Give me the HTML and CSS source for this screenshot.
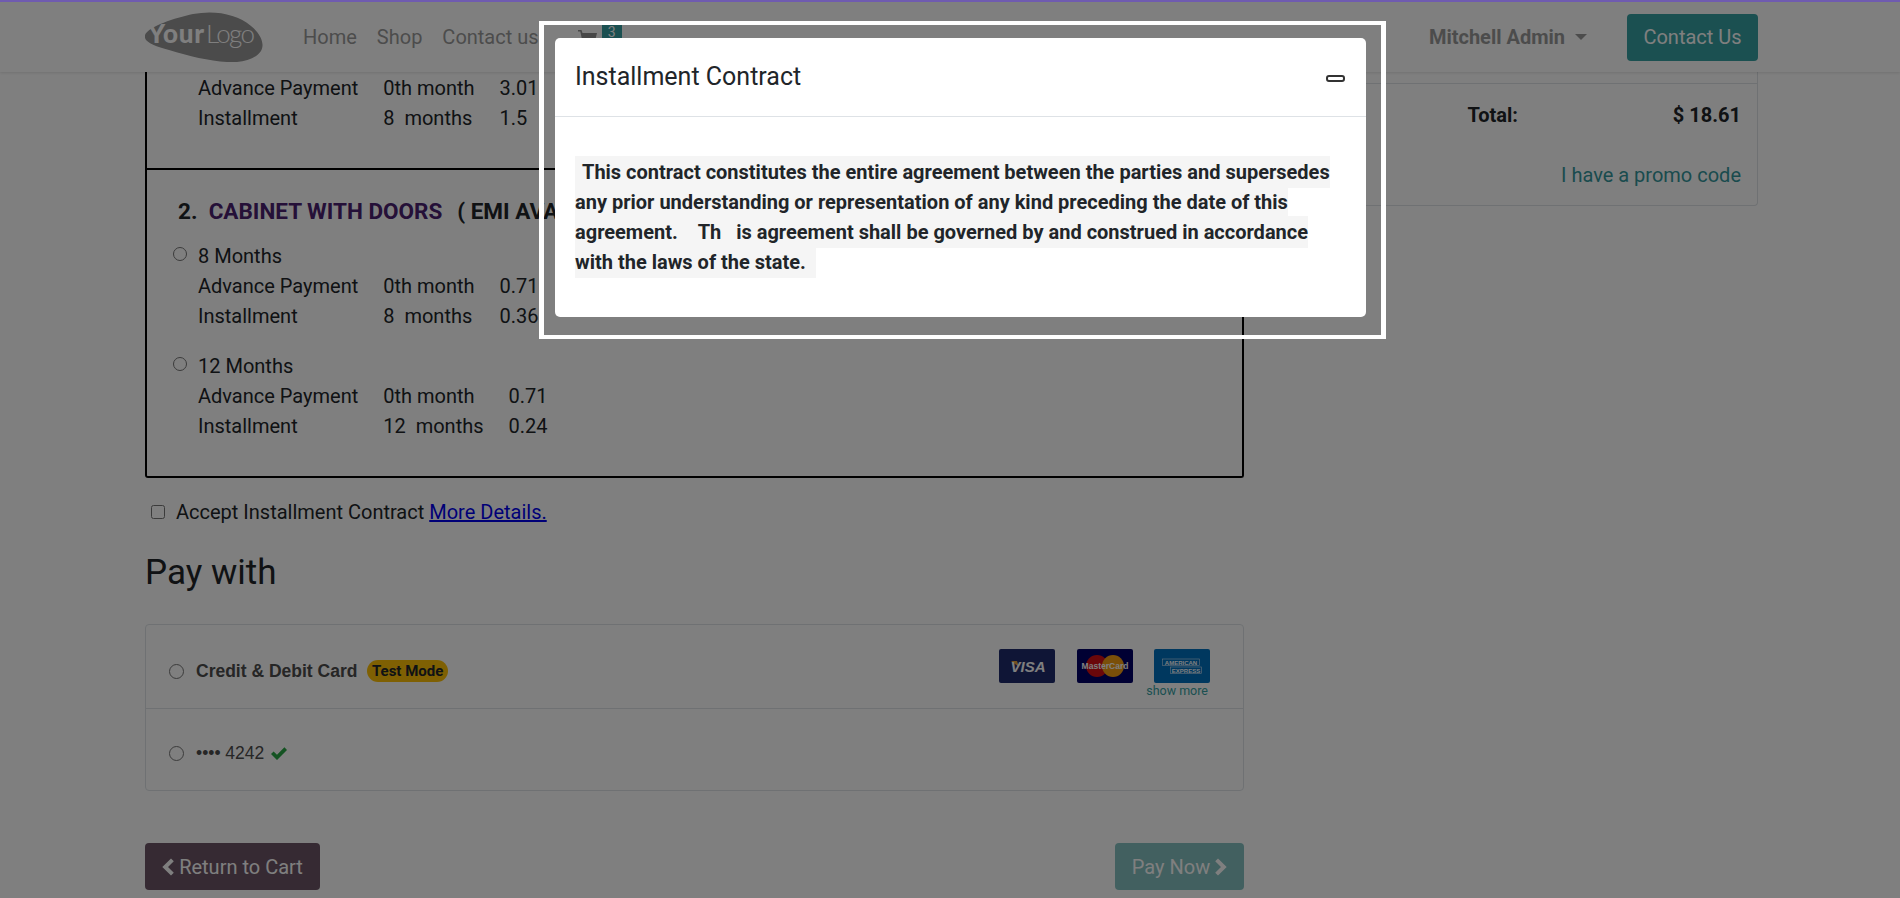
FILE: index.html
```html
<!DOCTYPE html>
<html lang="en">
<head>
<meta charset="utf-8">
<title>Payment</title>
<link rel="stylesheet" href="styles.css">
</head>
<body>
<div class="topline"></div>
<header class="navbar">
  <a class="logo" href="#" aria-label="Your Logo">
    <svg width="118" height="50" viewBox="0 0 118 50">
      <path d="M0 23C4 14 30 6 48 2C70-2 92 2 106 14C116 22 120 32 116 39C110 48 96 51 82 50C64 49 44 44 24 38C10 34-2 30 0 23Z" fill="#969696"/>
      <text x="3" y="31" textLength="56" class="logo-your">Your</text>
      <text x="61" y="31" textLength="49" class="logo-logo">Logo</text>
    </svg>
  </a>
  <nav class="nav">
    <a href="#">Home</a>
    <a href="#">Shop</a>
    <a href="#">Contact us</a>
    <a href="#" class="cart">
      <svg width="19" height="18" viewBox="0 0 19 18"><path d="M0 0h3.500l1 3H19l-2 8H6l.4 2H17v1.600H5L2.300 1.600H0z" fill="#8f8f8f"/><circle cx="7" cy="16.500" r="1.500" fill="#8f8f8f"/><circle cx="15" cy="16.500" r="1.500" fill="#8f8f8f"/></svg>
      <span class="badge">3</span>
    </a>
  </nav>
  <div class="nav-right">
    <a href="#" class="user">Mitchell Admin<span class="caret"></span></a>
    <a href="#" class="btn btn-contact">Contact Us</a>
  </div>
</header>

<main class="page">
  <div class="left">
    <div class="emi-box">
      <section class="emi-section first">
        <div class="option no-radio">
          <table class="plan">
            <tr><td>Advance Payment</td><td>0th month</td><td>3.01</td></tr>
            <tr><td>Installment</td><td>8&nbsp; months</td><td>1.5</td></tr>
          </table>
        </div>
      </section>
      <section class="emi-section">
        <h4 class="emi-title">2.&nbsp; <span class="purple">CABINET WITH DOORS</span> &nbsp; ( EMI AVAILABLE )</h4>
        <div class="option">
          <input type="radio" name="plan">
          <div>
            <div class="opt-label">8 Months</div>
            <table class="plan">
              <tr><td>Advance Payment</td><td>0th month</td><td>0.71</td></tr>
              <tr><td>Installment</td><td>8&nbsp; months</td><td>0.36</td></tr>
            </table>
          </div>
        </div>
        <div class="option">
          <input type="radio" name="plan">
          <div>
            <div class="opt-label">12 Months</div>
            <table class="plan">
              <tr><td>Advance Payment</td><td>0th month</td><td>0.71</td></tr>
              <tr><td>Installment</td><td>12&nbsp; months</td><td>0.24</td></tr>
            </table>
          </div>
        </div>
      </section>
    </div>

    <label class="accept"><input type="checkbox"><span>Accept Installment Contract <a href="#">More Details.</a></span></label>

    <h3 class="pay-title">Pay with</h3>

    <div class="pay-card">
      <div class="pay-row pay-row-main">
        <input type="radio" name="pay">
        <strong class="pay-name">Credit &amp; Debit Card</strong>
        <span class="test-badge">Test Mode</span>
        <div class="pay-icons">
          <div class="icon-line">
            <svg width="56" height="34" viewBox="0 0 56 34"><rect width="56" height="34" rx="2" fill="#1f2a6d"/><path d="M12 12l6 0 2 6z" fill="#e8a33d"/><text x="29" y="23" class="visa">VISA</text></svg>
            <svg width="56" height="34" viewBox="0 0 56 34"><rect width="56" height="34" rx="2" fill="#000066"/><circle cx="20" cy="17" r="11" fill="#d40f14"/><circle cx="36" cy="17" r="11" fill="#f59e12"/><text x="28" y="20" class="mc">MasterCard</text></svg>
            <svg width="56" height="34" viewBox="0 0 56 34"><rect width="56" height="34" rx="2" fill="#0170bf"/><rect x="8.500" y="10" width="37" height="6.500" fill="none" stroke="#cfe3f3" stroke-width=".6"/><rect x="16.500" y="18" width="31" height="6.500" fill="none" stroke="#cfe3f3" stroke-width=".6"/><text x="27" y="15.500" class="amex">AMERICAN</text><text x="32" y="23.500" class="amex">EXPRESS</text></svg>
          </div>
          <a href="#" class="show-more">show more</a>
        </div>
      </div>
      <div class="pay-row">
        <input type="radio" name="pay">
        <span class="pay-token">•••• 4242</span>
        <svg class="check" width="18" height="15" viewBox="0 0 18 15"><path d="M1 8l2.600-2.600 3.400 3.400L14.400 1.300 17 4 7 14z" fill="#28a745"/></svg>
      </div>
    </div>

    <div class="actions">
      <a href="#" class="btn btn-back"><svg width="12" height="18" viewBox="0 0 12 18"><path d="M9 .5l2.800 2.800L6 9l5.800 5.700L9 17.500.3 9z" fill="#fff"/></svg> Return to Cart</a>
      <a href="#" class="btn btn-pay">Pay Now <svg width="12" height="18" viewBox="0 0 12 18"><path d="M3 .5L.2 3.300 6 9 .2 14.700 3 17.500 11.700 9z" fill="#fff"/></svg></a>
    </div>
  </div>

  <aside class="summary">
    <div class="sum-top"></div>
    <div class="sum-total"><span>Total:</span><span class="sum-amount">$ 18.61</span></div>
    <a href="#" class="promo">I have a promo code</a>
  </aside>
</main>

<div class="backdrop"></div>
<div class="spot">
  <div class="modal">
    <div class="modal-head">
      <h5 class="modal-title">Installment Contract</h5>
      <button class="modal-close" aria-label="Close"></button>
    </div>
    <div class="modal-body">
      <p class="contract"><mark><span class="lead">&nbsp;</span>This contract constitutes the entire agreement between the parties and supersedes any prior understanding or representation of any kind preceding the date of this agreement.&nbsp; &nbsp;&nbsp;Th&nbsp;&nbsp; is agreement shall be governed by and construed in accordance with the laws of the state.&nbsp;&nbsp;</mark></p>
    </div>
  </div>
</div>
</body>
</html>
```

FILE: styles.css
```css
* { box-sizing: border-box; }
html, body { height: 100%; overflow: hidden; }
body { margin: 0; background: #fff; color: #212529; font-family: Roboto, "Liberation Sans", sans-serif; font-size: 20px; line-height: 30px; }
a { text-decoration: none; color: inherit; }

.topline { position: relative; z-index: 7; height: 2px; background: #6f5bb0; }
.navbar { position: relative; z-index: 2; height: 70px; display: flex; align-items: center; padding: 0 142px 0 145px; background: #fff; box-shadow: 0 1px 3px rgba(0,0,0,.12); }
.logo { display: block; height: 50px; }
.logo-your { font: 900 26px Lato, sans-serif; fill: #fff; }
.logo-logo { font: 300 26px Lato, sans-serif; fill: #fff; }
.nav { display: flex; align-items: center; gap: 20px; margin-left: 40px; color: #999; }
.cart { position: relative; margin-left: 19px; width: 42px; height: 30px; display: block; }
.cart svg { position: absolute; left: 0; top: 8px; }
.badge { position: absolute; left: 24px; top: -1px; width: 20px; height: 22px; background: #36a0a2; color: #fff; font-size: 14px; line-height: 22px; text-align: center; }
.nav-right { margin-left: auto; display: flex; align-items: center; }
.user { font-weight: 700; color: #999; display: flex; align-items: center; }
.caret { width: 0; height: 0; margin-left: 10px; border: 6px solid transparent; border-top-color: #999; border-bottom: 0; }
.btn { display: inline-flex; align-items: center; justify-content: center; height: 47px; border-radius: 4px; color: #fff; }
.btn-contact { width: 131px; margin-left: 40px; background: #36a0a2; }

.page { display: flex; gap: 31px; padding: 0 142px 0 145px; }
.left { width: 1099px; flex: none; }
.emi-box { border: 2px solid #000; border-top: 0; border-radius: 0 0 3px 3px; }
.emi-section { padding-bottom: 35px; }
.emi-section.first { padding-top: 1px; border-bottom: 2px solid #000; }
.emi-title { margin: 0 0 15px; padding: 26px 0 0 31px; font-size: 22.500px; font-weight: 700; line-height: 30px; }
.purple { color: #4a2070; margin-right: -2px; }
.option { display: flex; padding-left: 26px; gap: 11px; }
.option + .option { margin-top: 20px; }
.option.no-radio { padding-left: 51px; }
.option input { width: 14px; height: 14px; margin: 6px 0 0; flex: none; }
.plan { border-collapse: collapse; }
.plan td { padding: 0 25px 0 0; height: 30px; white-space: nowrap; }

.accept { display: flex; align-items: center; gap: 11px; margin: 19px 0 0 6px; height: 30px; }
.accept input { width: 14px; height: 14px; margin: 0; }
.accept a { color: #0000ee; text-decoration: underline; }
.pay-title { margin: 26px 0 0; font-size: 35px; font-weight: 400; line-height: 40px; }

.pay-card { margin-top: 31px; height: 167px; border: 1px solid #dee2e6; border-radius: 4px; }
.pay-row { height: 83px; display: flex; align-items: center; padding: 6px 0 0 23px; gap: 12px; font-family: "Liberation Sans", sans-serif; color: #4c4c4c; }
.pay-row-main { padding-top: 9px; }
.pay-row + .pay-row { border-top: 1px solid #dee2e6; }
.pay-row input { width: 15px; height: 15px; margin: 0; }
.pay-name { font-size: 17.500px; }
.test-badge { margin-left: -2px; height: 22px; padding: 0 4.500px; border-radius: 11px; background: #ffc107; color: #212529; font: 700 15px/22px Roboto, sans-serif; }
.pay-token { font-size: 17.500px; }
.check { margin-left: -6px; }
.pay-icons { margin-left: auto; margin-right: 33px; display: flex; flex-direction: column; align-items: flex-end; padding-top: 5px; }
.icon-line { display: flex; gap: 21.500px; }
.visa { font: italic 900 15px "Liberation Sans", sans-serif; fill: #fff; text-anchor: middle; }
.mc { font: 700 8.500px "Liberation Sans", sans-serif; fill: #fff; text-anchor: middle; }
.amex { font: 700 6px "Liberation Sans", sans-serif; fill: #fff; text-anchor: middle; }
.show-more { font: 12.500px/16px Roboto, sans-serif; color: #36a0a2; margin: 0 2px 0 0; }

.actions { display: flex; justify-content: space-between; margin-top: 52px; }
.btn-back { width: 175px; background: #6c5466; gap: 5px; }
.btn-pay { width: 129px; background: #84c0c0; gap: 5px; }

.summary { flex: 1; align-self: flex-start; border: 1px solid #dee2e6; border-top: 0; border-radius: 0 0 4px 4px; height: 134px; }
.sum-top { height: 12px; border-bottom: 1px solid #dee2e6; }
.sum-total { display: flex; justify-content: flex-end; padding: 16px 16px 0 0; font-weight: 700; }
.sum-amount { width: 223px; text-align: right; }
.promo { display: block; text-align: right; padding: 30px 16px 0 0; color: #35979c; }

.backdrop { position: fixed; inset: 0; z-index: 5; background: rgba(0,0,0,.5); }
.spot { position: fixed; z-index: 6; left: 539px; top: 21px; width: 847px; height: 318px; border: 5px solid #fff; border-top-width: 4px; border-bottom-width: 4px; padding: 13px 0 0 11px; }
.modal { width: 811px; height: 279px; background: #fff; border-radius: 5px; }
.modal-head { height: 79px; padding: 0 21px 0 20px; display: flex; align-items: center; justify-content: space-between; border-bottom: 1px solid #dee2e6; }
.modal-title { margin: 0; font-size: 25px; font-weight: 400; line-height: 30px; }
.modal-close { width: 19px; height: 7px; margin-top: 3px; padding: 0; background: #fff; border: 2px solid #333; border-radius: 3px; }
.modal-body { padding: 40px 19px 0 20px; }
.contract { margin: 0; font-weight: 700; line-height: 30px; }
.contract mark { background: #f5f5f5; color: #212529; padding: 4px 0; }
.lead { padding-right: 2px; }
```
